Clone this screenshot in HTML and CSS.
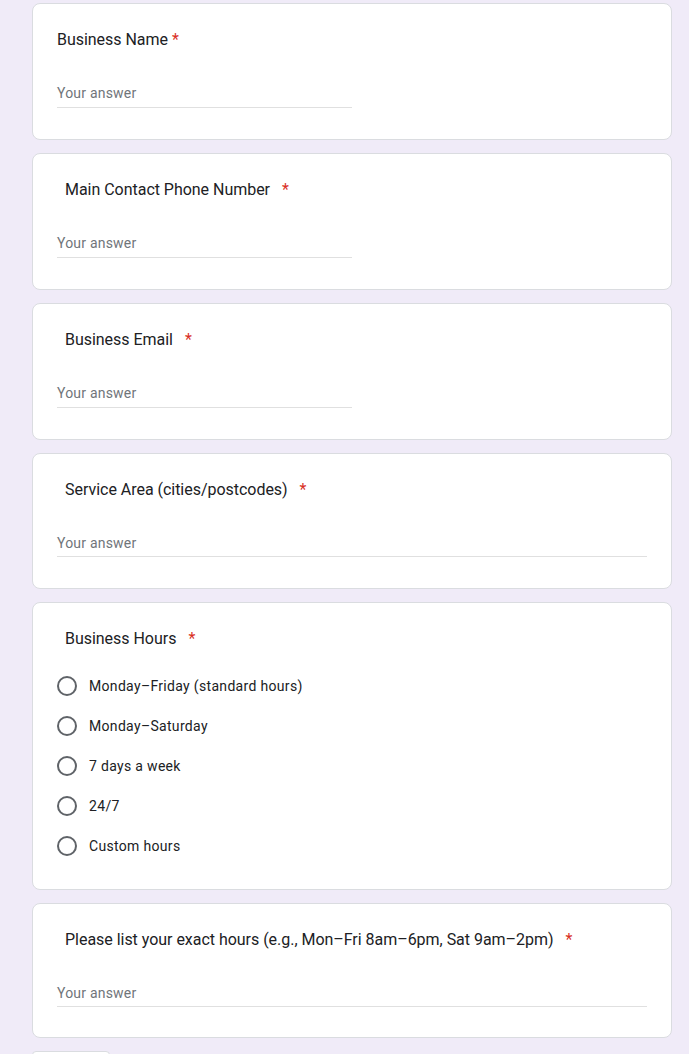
FILE: index.html
```html
<!DOCTYPE html>
<html lang="en">
<head>
<meta charset="utf-8">
<title>Business Form</title>
<link rel="stylesheet" href="styles.css">
</head>
<body>
<main class="form">
  <section class="card">
    <div class="q-title">Business Name<span class="req">*</span></div>
    <div class="answer"><span class="placeholder">Your answer</span></div>
  </section>

  <section class="card">
    <div class="q-title indent">Main Contact Phone Number<span class="req wide">*</span></div>
    <div class="answer"><span class="placeholder">Your answer</span></div>
  </section>

  <section class="card">
    <div class="q-title indent">Business Email<span class="req wide">*</span></div>
    <div class="answer"><span class="placeholder">Your answer</span></div>
  </section>

  <section class="card card-long">
    <div class="q-title indent">Service Area (cities/postcodes)<span class="req wide">*</span></div>
    <div class="answer long"><span class="placeholder">Your answer</span></div>
  </section>

  <section class="card card-choice">
    <div class="q-title indent">Business Hours<span class="req wide">*</span></div>
    <div class="options">
      <label class="option"><span class="radio"></span><span class="opt-text">Monday–Friday (standard hours)</span></label>
      <label class="option"><span class="radio"></span><span class="opt-text">Monday–Saturday</span></label>
      <label class="option"><span class="radio"></span><span class="opt-text">7 days a week</span></label>
      <label class="option"><span class="radio"></span><span class="opt-text">24/7</span></label>
      <label class="option"><span class="radio"></span><span class="opt-text">Custom hours</span></label>
    </div>
  </section>

  <section class="card card-long card-last">
    <div class="q-title indent">Please list your exact hours (e.g., Mon–Fri 8am–6pm, Sat 9am–2pm)<span class="req wide">*</span></div>
    <div class="answer long"><span class="placeholder">Your answer</span></div>
  </section>

  <div class="actions">
    <button class="btn">Back</button>
  </div>
</main>
</body>
</html>
```

FILE: styles.css
```css
* { box-sizing: border-box; }

html, body {
  margin: 0;
  padding: 0;
  background: #f0ebf8;
}

body {
  font-family: Roboto, "Liberation Sans", Arial, sans-serif;
  color: #202124;
}

.form {
  width: 640px;
  margin-left: 32px;
  padding-top: 3px;
  display: flex;
  flex-direction: column;
  gap: 13px;
}

.card {
  background: #fff;
  border: 1px solid #dadce0;
  border-radius: 8px;
  padding: 24px 24px 31px;
}

.card-last {
  padding-bottom: 30px;
}

.q-title {
  font-size: 16px;
  line-height: 24px;
  letter-spacing: -0.03px;
  color: #202124;
}

.q-title.indent {
  padding-left: 8px;
}

.req {
  color: #d93025;
  padding-left: 4px;
}

.req.wide {
  padding-left: 12px;
}

.answer {
  margin-top: 31px;
  width: 295px;
  padding-bottom: 4px;
  border-bottom: 1px solid #e0e0e0;
  font-size: 14px;
  line-height: 20px;
}

.answer.long {
  width: 100%;
  padding-bottom: 3px;
}

.placeholder {
  color: #70757a;
  letter-spacing: 0.2px;
}

.options {
  margin-top: 15px;
  margin-bottom: -8px;
  display: flex;
  flex-direction: column;
}

.option {
  height: 40px;
  display: flex;
  align-items: center;
  gap: 12px;
}

.radio {
  width: 20px;
  height: 20px;
  border: 2px solid #5f6368;
  border-radius: 50%;
  flex: none;
}

.opt-text {
  font-size: 14px;
  letter-spacing: 0.32px;
  color: #202124;
}

.actions {
  display: flex;
}

.btn {
  height: 36px;
  width: 78px;
  padding: 0;
  background: #fff;
  border: 1px solid #dadce0;
  border-radius: 4px;
  font-family: Roboto, "Liberation Sans", Arial, sans-serif;
  font-size: 14px;
  font-weight: 500;
  color: #673ab7;
}
```
